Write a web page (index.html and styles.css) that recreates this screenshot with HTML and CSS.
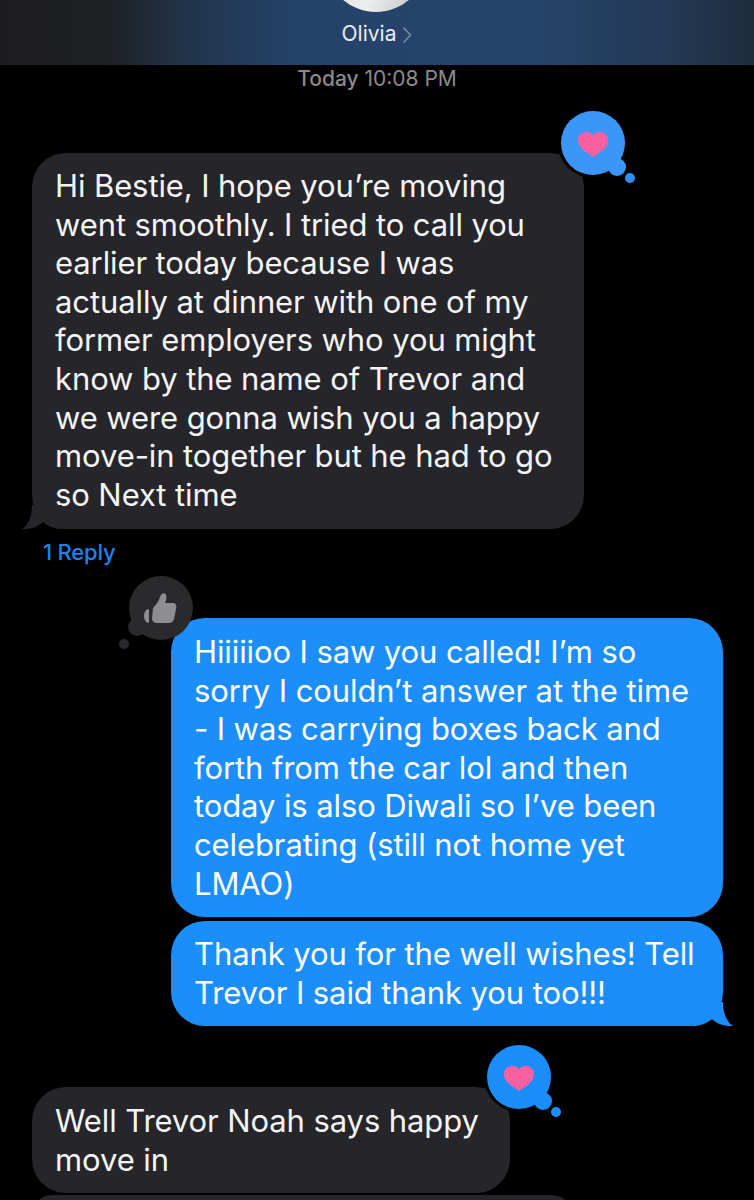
FILE: index.html
```html
<!DOCTYPE html>
<html lang="en">
<head>
    <meta charset="UTF-8">
    <title>Olivia</title>
    <link rel="stylesheet" href="styles.css">
</head>
<body>
    <header class="top-bar">
        <div class="avatar"></div>
        <div class="contact">
            <span>Olivia</span>
            <svg class="chevron" width="10" height="18" viewBox="0 0 10 18"><path d="M1.5 1.5 8.5 9 1.5 16.500" fill="none" stroke="#7f8ea0" stroke-width="1.5"/></svg>
        </div>
    </header>

    <main class="thread">
        <p class="stamp"><b>Today</b> 10:08 PM</p>

        <div class="bubble gray first">
            Hi Bestie, I hope you’re moving<br>
            went smoothly. I tried to call you<br>
            earlier today because I was<br>
            actually at dinner with one of my<br>
            former employers who you might<br>
            know by the name of Trevor and<br>
            we were gonna wish you a happy<br>
            move-in together but he had to go<br>
            so Next time
            <svg class="tail tail-left" width="40" height="24" viewBox="0 0 40 24"><path d="M10 0C10 12 6 20 0 24C8 24.500 16 22 21 17C26 21 32 24 40 24V0Z" fill="#26262a"/></svg>
            <svg class="reaction react-right" width="80" height="84" viewBox="0 0 80 84">
                <circle cx="35" cy="35" r="35" fill="#000"/>
                <circle cx="35" cy="35" r="32" fill="#3a97f8"/>
                <circle cx="59" cy="59" r="9" fill="#3a97f8"/>
                <circle cx="72" cy="70" r="5" fill="#2f8ff5"/>
                <path d="M35 49C28 44 20 40 20 32C20 27 24 24 28.500 24C31 24 33.500 25 35 27.500C36.500 25 39 24 41.500 24C46 24 50 27 50 32C50 40 42 44 35 49Z" fill="#f8609f"/>
            </svg>
        </div>

        <a class="reply">1 Reply</a>

        <div class="bubble blue second">
            Hiiiiioo I saw you called! I’m so<br>
            sorry I couldn’t answer at the time<br>
            - I was carrying boxes back and<br>
            forth from the car lol and then<br>
            today is also Diwali so I’ve been<br>
            celebrating (still not home yet<br>
            LMAO)
            <svg class="reaction react-left" width="80" height="84" viewBox="0 0 80 84">
                <circle cx="45" cy="35" r="32" fill="#2a2a2d"/>
                <circle cx="21" cy="54" r="9" fill="#2a2a2d"/>
                <circle cx="8" cy="71" r="5" fill="#2a2a2d"/>
                <path d="M33 36C30 36 28 39 28 43C28 47 30 50 33 50Z" fill="#8e8e90"/>
                <path d="M37 35C40 32 43 28 44 24C45 20 49 19 50 22C51 25 50 28 49 30H57C60 30 61 33 60 36L58 46C57 49 55 50 52 50H41C38 50 36 48 36 46Z" fill="#8e8e90"/>
            </svg>
        </div>

        <div class="bubble blue third">
            Thank you for the well wishes! Tell<br>
            Trevor I said thank you too!!!
            <svg class="tail tail-right" width="40" height="24" viewBox="0 0 40 24"><path d="M30 0C30 12 34 20 40 24C32 24.500 24 22 19 17C14 21 8 24 0 24V0Z" fill="#1c8efc"/></svg>
        </div>

        <div class="bubble gray fourth">
            Well Trevor Noah says happy<br>
            move in
            <svg class="reaction react-right" width="80" height="84" viewBox="0 0 80 84">
                <circle cx="35" cy="35" r="35" fill="#000"/>
                <circle cx="35" cy="35" r="32" fill="#1c8efc"/>
                <circle cx="59" cy="59" r="9" fill="#1c8efc"/>
                <circle cx="72" cy="70" r="5" fill="#1c8efc"/>
                <path d="M35 49C28 44 20 40 20 32C20 27 24 24 28.500 24C31 24 33.500 25 35 27.500C36.500 25 39 24 41.500 24C46 24 50 27 50 32C50 40 42 44 35 49Z" fill="#f8609f"/>
            </svg>
        </div>

        <div class="bubble gray fifth"></div>
    </main>
</body>
</html>
```

FILE: styles.css
```css
html, body {
    height: 1200px;
    overflow: hidden;
}

body {
    margin: 0;
    background: #000;
    color: #f4f4f5;
    font-family: "Inter", "Liberation Sans", sans-serif;
}

.top-bar {
    position: relative;
    height: 65px;
    overflow: hidden;
    background: linear-gradient(90deg, #1d1d1f 0%, #1e2022 14%, #21364e 26%, #25436a 40%, #26446a 70%, #233a56 88%, #1e2c3d 100%);
}

.avatar {
    position: absolute;
    left: 325px;
    top: -90px;
    width: 102px;
    height: 102px;
    border-radius: 50%;
    background: linear-gradient(120deg, #c9cdcb 0%, #eceeec 60%, #b9bdbb 100%);
}

.contact {
    display: flex;
    justify-content: center;
    align-items: center;
    gap: 6px;
    padding: 23px 0 0 0;
    font-size: 21px;
    line-height: 22px;
    color: #e9edf2;
}

.chevron {
    margin-top: 1px;
}

.thread {
    display: flex;
    flex-direction: column;
}

.stamp {
    margin: 0;
    padding-top: 2px;
    height: 88px;
    box-sizing: border-box;
    text-align: center;
    font-size: 21px;
    line-height: 24px;
    color: #8a8a8e;
}

.stamp b {
    font-weight: 500;
}

.bubble {
    position: relative;
    box-sizing: border-box;
    padding: 14px 23px;
    border-radius: 34px;
    font-size: 31px;
    line-height: 38.6px;
    letter-spacing: -0.1px;
    white-space: nowrap;
}

.gray {
    background: #26262a;
    align-self: flex-start;
    margin-left: 32px;
}

.blue {
    background: #1c8efc;
    color: #fff;
    align-self: flex-start;
    margin-left: 171px;
    width: 552px;
}

.first {
    width: 552px;
    height: 376px;
}

.second {
    height: 299px;
    margin-top: 54px;
    padding-top: 15px;
}

.third {
    height: 105px;
    margin-top: 4px;
}

.fourth {
    width: 478px;
    height: 106px;
    margin-top: 61px;
    padding-top: 15px;
}

.fifth {
    width: 540px;
    height: 40px;
    margin-top: 2px;
    padding: 0;
}

.reply {
    margin: 11px 0 0 43px;
    font-size: 22px;
    line-height: 24px;
    font-weight: 500;
    letter-spacing: -0.2px;
    color: #1c84e8;
}

.tail {
    position: absolute;
    bottom: 0;
}

.tail-left {
    left: -10px;
}

.tail-right {
    right: -10px;
}

.reaction {
    position: absolute;
}

.react-right {
    right: -54px;
    top: -45px;
}

.react-left {
    left: -55px;
    top: -45px;
}
```
